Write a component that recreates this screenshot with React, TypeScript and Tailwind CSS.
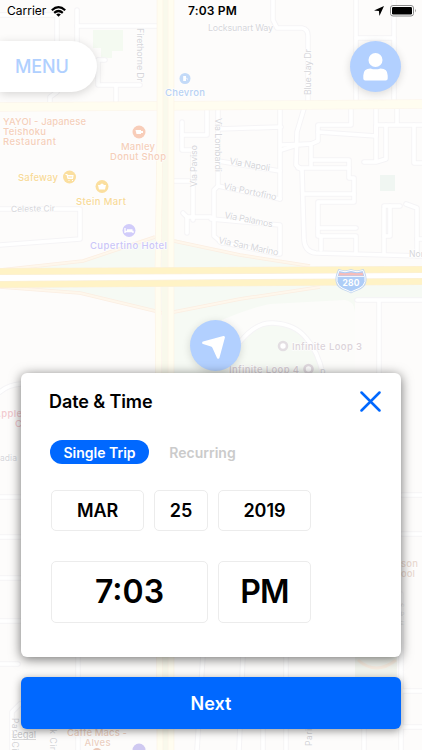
import React, { useState } from 'react';

type Label = {
  text: string;
  x: number;
  y: number;
  width: number;
  color: string;
  size?: number;
  rotate?: number;
  weight?: number;
};

const STREET = '#d6d6da';
const FOOD = '#f5cfba';
const SHOP = '#f8da98';

const labels: Label[] = [
  { text: 'Locksunart Way', x: 208, y: 31, width: 65, color: STREET, size: 9, weight: 400 },
  { text: 'Firethorne Dr', x: 137, y: 28, width: 54, color: STREET, size: 9, rotate: 90, weight: 400 },
  { text: 'Blue Jay Dr', x: 311, y: 95, width: 46, color: STREET, size: 9, rotate: -90, weight: 400 },
  { text: 'Chevron', x: 165, y: 95.5, width: 40, color: '#b8d1f3' },
  { text: 'YAYOI - Japanese', x: 3, y: 125, width: 83, color: FOOD },
  { text: 'Teishoku', x: 3, y: 135, width: 43, color: FOOD },
  { text: 'Restaurant', x: 3, y: 145, width: 53, color: FOOD },
  { text: 'Manley', x: 121, y: 150, width: 34, color: FOOD },
  { text: 'Donut Shop', x: 110, y: 160, width: 56, color: FOOD },
  { text: 'Safeway', x: 18, y: 181, width: 40, color: SHOP },
  { text: 'Stein Mart', x: 76, y: 204.5, width: 50, color: SHOP },
  { text: 'Cupertino Hotel', x: 90, y: 249, width: 77, color: '#cbc6f7' },
  { text: 'Celeste Cir', x: 11, y: 212, width: 44, color: STREET, size: 8.5, rotate: -1, weight: 400 },
  { text: 'Via Paviso', x: 197, y: 187, width: 42, color: STREET, size: 9, rotate: -90, weight: 400 },
  { text: 'Via Lombardi', x: 215, y: 118, width: 54, color: STREET, size: 9, rotate: 90, weight: 400 },
  { text: 'Via Napoli', x: 229, y: 164, width: 41, color: STREET, size: 9, rotate: 10, weight: 400 },
  { text: 'Via Portofino', x: 223, y: 189, width: 54, color: STREET, size: 9, rotate: 12, weight: 400 },
  { text: 'Via Palamos', x: 224, y: 218, width: 49, color: STREET, size: 9, rotate: 11, weight: 400 },
  { text: 'Via San Marino', x: 218, y: 243, width: 61, color: STREET, size: 9, rotate: 12, weight: 400 },
  { text: 'Nor', x: 409, y: 257, width: 15, color: STREET, size: 8.5, weight: 400 },
  { text: 'Infinite Loop 3', x: 292, y: 349.5, width: 70, color: '#dbd3d9' },
  { text: 'Infinite Loop 4', x: 229, y: 373, width: 70, color: '#d6ced3' },
  { text: 'p', x: 320, y: 374, width: 6, color: STREET, size: 9, weight: 400 },
  { text: 'Apple', x: -6, y: 417, width: 28, color: '#f2c9ce' },
  { text: 'Ca', x: 15, y: 427, width: 13, color: '#f2c9ce' },
  { text: 'cadia', x: -5, y: 460.5, width: 22, color: STREET, size: 8.5, weight: 400 },
  { text: 'son', x: 401, y: 566.5, width: 17, color: '#ead9d0' },
  { text: 'ool', x: 401, y: 576.5, width: 14, color: '#ead9d0' },
  { text: 'nes', x: 404, y: 625, width: 22, color: '#e4e3e4', size: 8, rotate: -90, weight: 400 },
  { text: 'Caffè Macs -', x: 67, y: 736, width: 60, color: '#ebcfc1' },
  { text: 'Alves', x: 84.5, y: 746, width: 26, color: '#ebcfc1' },
  { text: 'Park Cir', x: 12, y: 718, width: 36, color: '#d2d2d5', size: 8.5, rotate: 90, weight: 400 },
  { text: 'Park Cir', x: 50, y: 714, width: 36, color: '#d2d2d5', size: 8.5, rotate: 90, weight: 400 },
  { text: 'Paris', x: 312, y: 746, width: 22, color: '#d2d2d5', size: 8.5, rotate: -90, weight: 400 },
  { text: 'Legal', x: 12, y: 738, width: 24, color: '#c9c9cb', size: 9.5, weight: 400 },
];

const streets = [
  // north west
  'M0 15H57V42', 'M77 10V26V42', 'M77 26H158', 'M98 60V85H140', 'M98 60H105', 'M116 85V101', 'M57 92L50 97V103',
  'M0 209H80V239L0 245',
  // along the avenue
  'M182 122V150H193', 'M182 135H207V108', 'M193 150V220', 'M173 181H193', 'M211 217H187L183 213', 'M187 217V233',
  // Via streets
  'M273 0V20L277 28H302Q308 29 308 36V103', 'M218 108V186L214 190V236L222 243', 'M218 129L281 127', 'M280 110V199',
  'M218 161L280 171', 'M218 186L280 199', 'M211 219L280 225V254', 'M220 242L278 254',
  'M281 150L297 145L311 144', 'M281 145L311 144L318 141V126', 'M305 105L297 132L296 165L302 170L304 240Q305 252 316 253L422 256',
  'M318 125H351V108', 'M318 132L376 136V108', 'M311 146V166', 'M298 168H349',
  'M311 160H349V178H354V202H319', 'M304 194H354', 'M318 202V236H356V253', 'M318 228H356', 'M321 236V250',
  // north east
  'M356 0V103', 'M356 38H394V0', 'M394 38V100', 'M397 108V124', 'M377 125H422', 'M386 125V159L376 162H364', 'M376 126V161',
  'M414 125V163H422', 'M384 208V254', 'M384 206H400', 'M390 206V236H384', 'M406 204L417 208V256', 'M417 239H422',
  // south of the freeway
  'M357 300H422', 'M379 301V374',
  'M240 342Q256 322 273 323Q295 324 306 338Q318 351 323 375',
  'M0 392Q8 385 21 384', 'M0 497H21', 'M0 537H21', 'M0 578H21', 'M0 621H21', 'M0 664H18', 'M402 495H422', 'M402 534H422',
  'M401 594V750', 'M78 655V750', 'M203 655L197 750', 'M243 655L239 750', 'M286 655V750', 'M263 729V750', 'M401 691H422',
  'M401 727H422', 'M364 729V750', 'M12 750V712L20 704',
];

const MapView: React.FC = () => (
  <svg
    className="absolute inset-0"
    width="422"
    height="750"
    viewBox="0 0 422 750"
    fill="none"
    fontFamily="Inter, sans-serif"
  >
    <rect width="422" height="750" fill="#fdfcfb" />

    {/* parks and verges */}
    <path d="M93 30H123V51H112V58H101V48H93Z" fill="#f4faf1" />
    <path d="M380 175H395V191H380Z" fill="#f0f6f2" />
    <path d="M0 270L83 261L155 239H174L240 255L310 266H422V299H355V374H174V312H155L80 293L0 287Z" fill="#f6faf4" />
    <path d="M222 320Q250 308 270 304L345 300Q354 301 355 312V374H323Q317 350 306 338Q293 323 273 323Q256 323 240 342L222 340Z" fill="#fcfcfa" />
    <path d="M355 655H397V677H355Z" fill="#f4f6ef" />
    <path d="M358 660Q376 676 396 660" stroke="#f9eee2" strokeWidth="3" />

    {/* local streets */}
    {streets.map((d) => (
      <path key={d} d={d} stroke="#f5f4f6" strokeWidth="5.6" strokeLinejoin="round" strokeLinecap="round" />
    ))}
    {streets.map((d) => (
      <path key={d} d={d} stroke="#ffffff" strokeWidth="3.6" strokeLinejoin="round" strokeLinecap="round" />
    ))}

    {/* ramps */}
    <path
      d="M0 270L83 261L155 237M174 241L240 255L310 266M0 287L80 293L155 311Q165 315 174 312L240 299L320 287"
      stroke="#fbeee2"
      strokeWidth="3.5"
    />
    <path
      d="M0 270L83 261L155 237M174 241L240 255L310 266M0 287L80 293L155 311Q165 315 174 312L240 299L320 287"
      stroke="#fef7ec"
      strokeWidth="2"
    />

    {/* avenues */}
    <path d="M0 107L300 105L422 104" stroke="#fcf6ec" strokeWidth="9.5" />
    <path d="M0 107L300 105L422 104" stroke="#fffdf0" strokeWidth="8" />
    <path d="M165 0V750" stroke="#f9f9ec" strokeWidth="6" />
    <path d="M160 0V130L158 270L160 750M171 0V750" stroke="#fcf3e7" strokeWidth="6.6" />
    <path d="M160 0V130L158 270L160 750M171 0V750" stroke="#fffdf0" strokeWidth="5.2" />

    {/* freeway */}
    <path d="M0 277.5L422 275" stroke="#ffffff" strokeWidth="7" />
    <path d="M0 271.5L422 269.5M0 284.5L422 281.5" stroke="#fbefda" strokeWidth="7.2" />
    <path d="M0 271.5L422 269.5M0 284.5L422 281.5" stroke="#fff3c6" strokeWidth="6" />

    {/* interstate shield */}
    <path
      d="M339 270.500Q345 273 351 270.500Q357 273 363 270.500Q369 284 359 288.500Q355 290 351 292Q347 290 343 288.500Q333 284 339 270.500Z"
      stroke="#c3d6ee"
      strokeWidth="2.500"
    />
    <path
      d="M339 270.500Q345 273 351 270.500Q357 273 363 270.500Q369 284 359 288.500Q355 290 351 292Q347 290 343 288.500Q333 284 339 270.500Z"
      fill="#aecdf7"
      stroke="#ffffff"
      strokeWidth="1"
    />
    <path d="M339.500 272.500Q345 274 351 272.500Q357 274 362.500 272.500L363.500 275.500H338.500Z" fill="#f6bcb9" />
    <path d="M337.500 276.500H364.500" stroke="#ffffff" strokeWidth="0.800" />
    <text x="342.500" y="285.500" fontSize="8.500" fontWeight="700" fill="#ffffff" textLength="17">
      280
    </text>

    {/* places */}
    <circle cx="185" cy="78.500" r="5.500" fill="#c3daf8" />
    <path d="M183.200 76H186V81H183.200ZM186 77.500L187.500 78.500V80.500" fill="#ffffff" />
    <circle cx="139" cy="132" r="6.500" fill="#f8cdb9" />
    <path d="M135.500 130H141V134H136.500ZM141 131H143V133H141Z" fill="#ffffff" />
    <circle cx="69.500" cy="177" r="6.500" fill="#fbdf9f" />
    <path d="M65.500 174.500H67L68 178.500H72.500L73 175.500H67.500V177H72.500M68.500 180.500H69.500M72 180.500H73" stroke="#ffffff" strokeWidth="1.100" />
    <circle cx="102" cy="186.500" r="6.500" fill="#fbdf9f" />
    <path d="M98 185H106L105 189.500H99ZM100 185Q102 182 104 185" fill="#ffffff" />
    <circle cx="129" cy="230.500" r="6.500" fill="#d1ccfa" />
    <path d="M125 228V233M125 231.500H133V233M127 230H132.500" stroke="#ffffff" strokeWidth="1.300" />
    <circle cx="283" cy="346" r="4" fill="#ffffff" stroke="#e3dee2" strokeWidth="2.600" />
    <circle cx="308.500" cy="369" r="4" fill="#ffffff" stroke="#e0dadf" strokeWidth="2.600" />
    <circle cx="97" cy="753" r="5" fill="#ebc9b9" />
    <circle cx="139" cy="750" r="6.500" fill="#cfc9f1" />

    {labels.map((l) => (
      <text
        key={`${l.text}-${l.x}`}
        x={l.x}
        y={l.y}
        textLength={l.width}
        fontSize={l.size ?? 9.5}
        fontWeight={l.weight ?? 500}
        fill={l.color}
        stroke="#ffffff"
        strokeWidth="1.2"
        paintOrder="stroke"
        transform={l.rotate ? `rotate(${l.rotate} ${l.x} ${l.y})` : undefined}
      >
        {l.text}
      </text>
    ))}
    <path d="M12 739.500H36" stroke="#cfcfd1" strokeWidth="0.800" />
  </svg>
);

const StatusBar: React.FC = () => (
  <header className="grid h-[22px] grid-cols-3 items-center pl-[7px] pr-[5px] text-[12px] leading-none text-black">
    <div className="flex items-center gap-[5px]">
      <span>Carrier</span>
      <svg width="15" height="11" viewBox="0 0 15 11" fill="none" stroke="#000" strokeWidth="2.200">
        <path d="M0.800 4.200Q7.500 -1.800 14.200 4.200" />
        <path d="M3.200 6.800Q7.500 3.200 11.800 6.800" />
        <path d="M7.500 10.800L5.200 8.400Q7.500 6.700 9.800 8.400Z" fill="#000" stroke="none" />
      </svg>
    </div>
    <span className="pl-px text-center font-semibold tracking-[0.2px]">7:03 PM</span>
    <div className="flex items-center justify-end gap-[6px]">
      <svg width="10" height="10" viewBox="0 0 10 10">
        <path d="M10 0L5.400 10L4.900 5.100L0 4.600Z" fill="#000" />
      </svg>
      <svg width="27" height="12" viewBox="0 0 27 12">
        <rect x="0.500" y="0.500" width="23" height="10.500" rx="2.500" fill="#fff" stroke="#8b8b8b" />
        <rect x="2" y="2" width="20" height="7.500" rx="1.200" fill="#000" />
        <path d="M25 3.800Q26.800 5.700 25 7.600Z" fill="#8b8b8b" />
      </svg>
    </div>
  </header>
);

const Field: React.FC<{ className: string; children: React.ReactNode }> = ({ className, children }) => (
  <button className={`flex items-center justify-center rounded-[5px] border border-[#ececec] ${className}`}>
    {children}
  </button>
);

const App: React.FC = () => {
  const [recurring, setRecurring] = useState(false);
  const active = 'bg-[#0068ff] text-white';
  const inactive = 'text-[#cbcbcb]';

  return (
    <div className="relative h-[750px] w-[422px] overflow-hidden font-['Inter',sans-serif] text-black">
      <MapView />

      <div className="relative flex h-full flex-col">
        <StatusBar />

        <div className="mt-[19px] flex h-[51px] shrink-0 justify-between pr-[21px]">
          <button className="w-[97px] rounded-r-full bg-white pl-[15px] text-left text-[18px] font-medium tracking-[-0.1px] text-[#b0d0ff] shadow-[0_2px_10px_rgba(0,0,0,0.16)]">
            MENU
          </button>
          <button className="flex size-[51px] items-center justify-center rounded-full bg-[#b2d0ff] shadow-[0_2px_8px_rgba(0,0,0,0.14)]">
            <svg width="25" height="28" viewBox="0 0 25 28" fill="#fff">
              <circle cx="12.500" cy="7" r="7" />
              <path d="M0.300 25.500V22.500Q0.300 15.500 7.500 15.500Q12.500 17.200 17.500 15.500Q24.700 15.500 24.700 22.500V25.500Q24.700 27.500 22.700 27.500H2.300Q0.300 27.500 0.300 25.500Z" />
            </svg>
          </button>
        </div>

        <button className="ml-[190px] mt-[228px] flex size-[51px] shrink-0 items-center justify-center rounded-full bg-[#b2d0ff] shadow-[0_2px_8px_rgba(0,0,0,0.14)]">
          <svg width="29" height="29" viewBox="0 0 29 29">
            <path
              d="M2.400 11.800L22.600 6.300L17.200 26.400L12.700 16.400Q12 14.800 10.300 14.300Z"
              fill="#fff"
              stroke="#fff"
              strokeWidth="2.600"
              strokeLinejoin="round"
            />
          </svg>
        </button>

        <section className="mx-[21px] mt-[2px] h-[284px] shrink-0 rounded-[6px] bg-white pl-[30px] shadow-[0_2px_12px_rgba(0,0,0,0.56)]">
          <div className="flex items-center justify-between pr-[20px] pt-[16px]">
            <h1 className="-ml-[2px] mt-px text-[18px] font-semibold leading-[24px] tracking-[-0.1px]">Date &amp; Time</h1>
            <button aria-label="Close">
              <svg width="21" height="21" viewBox="0 0 21 21" stroke="#0068ff" strokeWidth="2.500" strokeLinecap="round">
                <path d="M1.500 1.500L19.500 19.500M19.500 1.500L1.500 19.500" />
              </svg>
            </button>
          </div>

          <div className="-ml-[1px] mt-[26px] flex h-[24px] text-[14px] font-semibold">
            <button
              onClick={() => setRecurring(false)}
              className={`w-[99px] rounded-full ${recurring ? inactive : active}`}
            >
              Single Trip
            </button>
            <button
              onClick={() => setRecurring(true)}
              className={`ml-[8px] w-[91px] rounded-full ${recurring ? active : inactive}`}
            >
              Recurring
            </button>
          </div>

          <div className="mt-[26px] flex gap-[10px] text-[18px] font-semibold">
            <Field className="h-[41px] w-[93px] tracking-[-0.2px]">MAR</Field>
            <Field className="h-[41px] w-[54px]">25</Field>
            <Field className="h-[41px] w-[93px]">2019</Field>
          </div>

          <div className="mt-[30px] flex gap-[10px] text-[32px] font-semibold">
            <Field className="h-[62px] w-[157px]">7:03</Field>
            <Field className="h-[62px] w-[93px] tracking-[-0.8px]">PM</Field>
          </div>
        </section>

        <button className="mx-[21px] mt-[20px] h-[52px] shrink-0 rounded-[6px] bg-[#0068ff] text-[18px] font-semibold text-white shadow-[0_2px_9px_rgba(0,0,0,0.42)]">
          Next
        </button>
      </div>
    </div>
  );
};

export default App;
